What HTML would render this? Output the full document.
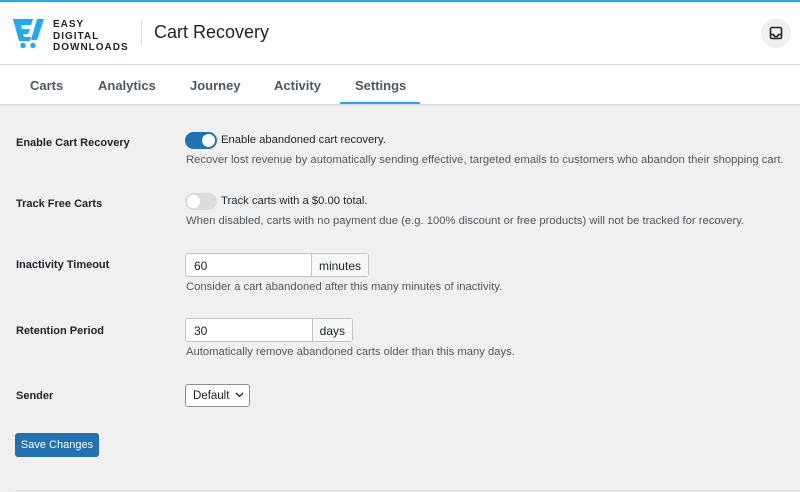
<!DOCTYPE html>
<html><head><meta charset="utf-8"><style>
*{box-sizing:border-box;margin:0;padding:0}
body{width:800px;height:492px;overflow:hidden;background:#f0f0f1;font-family:"Liberation Sans",sans-serif;color:#1d2327;position:relative}
.abs{position:absolute}
.hdr{left:0;top:0;width:800px;height:65px;background:#fff;border-top:2px solid #1eaaf1;border-bottom:1px solid #dcdcde}
.tabs{left:0;top:65px;width:800px;height:40px;background:#fff;border-bottom:1px solid #dcdcde;box-shadow:0 1px 3px rgba(0,0,0,.06)}
.tab{position:absolute;top:13px;font-size:13px;color:#50575e;font-weight:bold}
.lbl{position:absolute;left:16px;font-size:11px;font-weight:bold;color:#1d2327}
.txt{position:absolute;left:186px;font-size:11.25px;color:#50575e;white-space:nowrap}
.t2{position:absolute;left:221px;font-size:11.25px;color:#1d2327}
.tog{position:absolute;left:185px;width:32px;height:17px;border-radius:9px}
.tog i{position:absolute;top:2px;width:13px;height:13px;border-radius:50%;background:#fff}
.inp{position:absolute;left:185px;height:24px;width:184px;border:1px solid #c3c4c7;border-radius:3px;background:#fff;font-size:12px}
.inp span{position:absolute;left:8px;top:5px;color:#1d2327}
.inp b{position:absolute;right:0;top:0;height:22px;font-weight:normal;background:#f6f7f7;border-left:1px solid #c3c4c7;padding:5px 7px 0;color:#1d2327}
</style></head><body>
<div class="abs hdr">
<svg class="abs" style="left:13px;top:15px" width="33" height="32" viewBox="0 0 33 32"><path d="M0 2h20l-2 6H8l1 4h8l-2 5H10l1 3h7l-1 4H6z" fill="#1eaaf1"/><path d="M24 2h7l-7 21h-6z" fill="#1eaaf1"/><circle cx="10" cy="28.5" r="2.7" fill="#1eaaf1"/><circle cx="20" cy="28.5" r="2.7" fill="#1eaaf1"/></svg>
<div class="abs" style="left:53px;top:17px;font-size:10px;font-weight:bold;letter-spacing:1px;line-height:11.5px;color:#1d2327">EASY<br>DIGITAL<br>DOWNLOADS</div>
<div class="abs" style="left:141px;top:18px;width:1px;height:25px;background:#dcdcde"></div>
<div class="abs" style="left:154px;top:20px;font-size:18px;color:#1d2327">Cart Recovery</div>
<div class="abs" style="left:761px;top:16px;width:30px;height:30px;border-radius:50%;background:#f0f0f1"></div>
<svg class="abs" style="left:769px;top:24px" width="14" height="14" viewBox="0 0 14 14"><rect x="1.5" y="1.5" width="11" height="11" rx="1.5" fill="none" stroke="#1d2327" stroke-width="1.6"/><path d="M1.5 8.5h3l1 2h3l1-2h3" fill="none" stroke="#1d2327" stroke-width="1.6"/></svg>
</div>
<div class="abs tabs">
<span class="tab" style="left:30px">Carts</span>
<span class="tab" style="left:98px">Analytics</span>
<span class="tab" style="left:190px">Journey</span>
<span class="tab" style="left:274px">Activity</span>
<span class="tab" style="left:355px">Settings</span>
<div class="abs" style="left:340px;top:37px;width:80px;height:2px;background:#1eaaf1"></div>
</div>

<div class="lbl" style="top:137px">Enable Cart Recovery</div>
<div class="tog" style="top:132px;background:#2271b1"><i style="left:17px"></i></div>
<div class="t2" style="top:134px">Enable abandoned cart recovery.</div>
<div class="txt" style="top:154px">Recover lost revenue by automatically sending effective, targeted emails to customers who abandon their shopping cart.</div>

<div class="lbl" style="top:198px">Track Free Carts</div>
<div class="tog" style="top:193px;background:#dcdcde"><i style="left:2px"></i></div>
<div class="t2" style="top:195px">Track carts with a $0.00 total.</div>
<div class="txt" style="top:215px">When disabled, carts with no payment due (e.g. 100% discount or free products) will not be tracked for recovery.</div>

<div class="lbl" style="top:259px">Inactivity Timeout</div>
<div class="inp" style="top:253px"><span>60</span><b>minutes</b></div>
<div class="txt" style="top:281px">Consider a cart abandoned after this many minutes of inactivity.</div>

<div class="lbl" style="top:325px">Retention Period</div>
<div class="inp" style="top:318px;width:168px"><span>30</span><b>days</b></div>
<div class="txt" style="top:346px">Automatically remove abandoned carts older than this many days.</div>

<div class="lbl" style="top:390px">Sender</div>
<div class="abs" style="left:185px;top:384px;width:65px;height:23px;border:1px solid #8c8f94;border-radius:3px;background:#fff;font-size:11.5px;padding:5px 0 0 7px">Default</div>
<svg class="abs" style="left:235px;top:392px" width="9" height="6" viewBox="0 0 9 6"><path d="M1 1l3.5 3.5L8 1" fill="none" stroke="#1d2327" stroke-width="1.3"/></svg>

<div class="abs" style="left:15px;top:433px;width:84px;height:24px;background:#2271b1;border-radius:3px;color:#fff;font-size:11px;padding-top:6px;text-align:center">Save Changes</div>
<div class="abs" style="left:15px;top:490px;width:785px;height:1px;background:#dcdcde"></div>
</body></html>
